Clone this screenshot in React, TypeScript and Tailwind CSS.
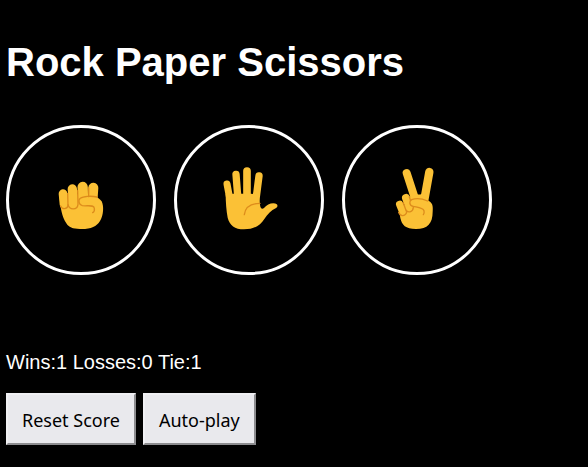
import { useState } from "react";
import type { ReactNode } from "react";

const FILL = "#fbc136";
const LINE = "#dd8c1c";

function RockIcon() {
  return (
    <svg viewBox="-15 -18 216 216" className="size-18" aria-hidden="true">
      <g fill={FILL}>
        <path d="M29 84 C31 112 36 141 49 160 C56 172 68 177 90 177 C122 178 139 170 150 153 C161 137 162 108 155 94 C150 86 142 82 134 80 L60 70Z" />
        <path d="M39 71 L42 103" stroke={FILL} strokeWidth="26" strokeLinecap="round" />
        <path d="M67 57 L70 100" stroke={FILL} strokeWidth="28" strokeLinecap="round" />
        <path d="M98 51 L99 95" stroke={FILL} strokeWidth="31" strokeLinecap="round" />
        <path d="M130 53 L128 82" stroke={FILL} strokeWidth="30" strokeLinecap="round" />
      </g>
      <g fill="none" stroke={LINE} strokeWidth="4" strokeLinecap="round">
        <path d="M32 108 C36 119 52 119 54 106 L53 70" />
        <path d="M54 104 C58 121 82 121 84 103 L83 62" />
        <path d="M116 54 L116 80" />
        <path d="M141 81 C124 77 100 78 91 85 C83 91 87 105 97 107 C112 109 132 103 133 115 C134 121 132 126 128 128" />
      </g>
    </svg>
  );
}

function PaperIcon() {
  return (
    <svg viewBox="-9 12 216 216" className="size-18" aria-hidden="true">
      <g fill="none" stroke={FILL} strokeLinecap="round">
        <path d="M33 72 L44 130" strokeWidth="21" />
        <path d="M60 43 L66 120" strokeWidth="22" />
        <path d="M93 33 L93 120" strokeWidth="23" />
        <path d="M129 48 L119 125" strokeWidth="22" />
      </g>
      <path
        fill={FILL}
        d="M29 102 L53 101 L78 101 L104 101 L128 104 L132 134 C133 145 138 149 144 144 C152 135 161 130 172 130 C186 130 188 140 179 145 C166 151 155 163 145 177 C133 197 113 208 84 208 C56 208 41 196 35 173 C31 152 29 126 29 102Z"
      />
      <path
        d="M132 130 C109 130 88 139 85 164"
        fill="none"
        stroke={LINE}
        strokeWidth="4"
        strokeLinecap="round"
      />
    </svg>
  );
}

function ScissorsIcon() {
  return (
    <svg viewBox="-21 12 216 216" className="size-18" aria-hidden="true">
      <g fill="none" stroke={FILL} strokeLinecap="round">
        <path d="M56 39 L83 122" strokeWidth="24" />
        <path d="M124 36 L108 125" strokeWidth="25" />
        <path d="M54 114 L66 145" strokeWidth="24" />
        <path d="M35 133 L45 158" strokeWidth="22" />
      </g>
      <path
        fill={FILL}
        d="M64 113 L83 101 Q93 106 101 101 L122 123 C132 127 136 137 134 155 C134 190 119 207 84 207 C52 207 42 195 37 174 L34 157Z"
      />
      <g fill="none" stroke={LINE} strokeWidth="4" strokeLinecap="round">
        <path d="M32 157 C37 172 54 168 56 156 L45 127" />
        <path d="M55 151 C62 160 75 155 76 142" />
        <path d="M68 122 L64 111" />
        <path d="M119 123 C100 115 82 115 71 119 C63 123 63 136 75 139 C88 142 104 142 108 152 C109 157 109 161 106 164" />
      </g>
    </svg>
  );
}

function MoveButton({ label, children }: { label: string; children: ReactNode }) {
  return (
    <button
      type="button"
      aria-label={label}
      className="flex size-[150px] shrink-0 items-center justify-center rounded-full border-3 border-white"
    >
      {children}
    </button>
  );
}

const actionClass =
  "border-2 border-t-[#f0f0f3] border-l-[#f0f0f3] border-r-[#8c8c8f] border-b-[#8c8c8f] bg-[#e9e9ed] px-3.5 pt-3 pb-2.5 font-['Noto_Sans',sans-serif] text-lg leading-[26px] text-black";

export default function App() {
  const [score, setScore] = useState({ wins: 1, losses: 0, ties: 1 });
  return (
    <main className="min-h-screen bg-black px-1.5 pt-9 pb-5 font-['Liberation_Sans',Arial,sans-serif] text-white">
      <h1 className="text-[40px] leading-[52px] font-bold">Rock Paper Scissors</h1>
      <div className="mt-[37px] flex flex-wrap gap-[18px]">
        <MoveButton label="Rock">
          <RockIcon />
        </MoveButton>
        <MoveButton label="Paper">
          <PaperIcon />
        </MoveButton>
        <MoveButton label="Scissors">
          <ScissorsIcon />
        </MoveButton>
      </div>
      <p className="mt-[75px] text-xl leading-6">
        Wins:{score.wins} Losses:{score.losses} Tie:{score.ties}
      </p>
      <div className="mt-[19px] flex flex-wrap gap-[7px]">
        <button
          type="button"
          className={actionClass}
          onClick={() => setScore({ wins: 0, losses: 0, ties: 0 })}
        >
          Reset Score
        </button>
        <button type="button" className={actionClass}>
          Auto-play
        </button>
      </div>
    </main>
  );
}
